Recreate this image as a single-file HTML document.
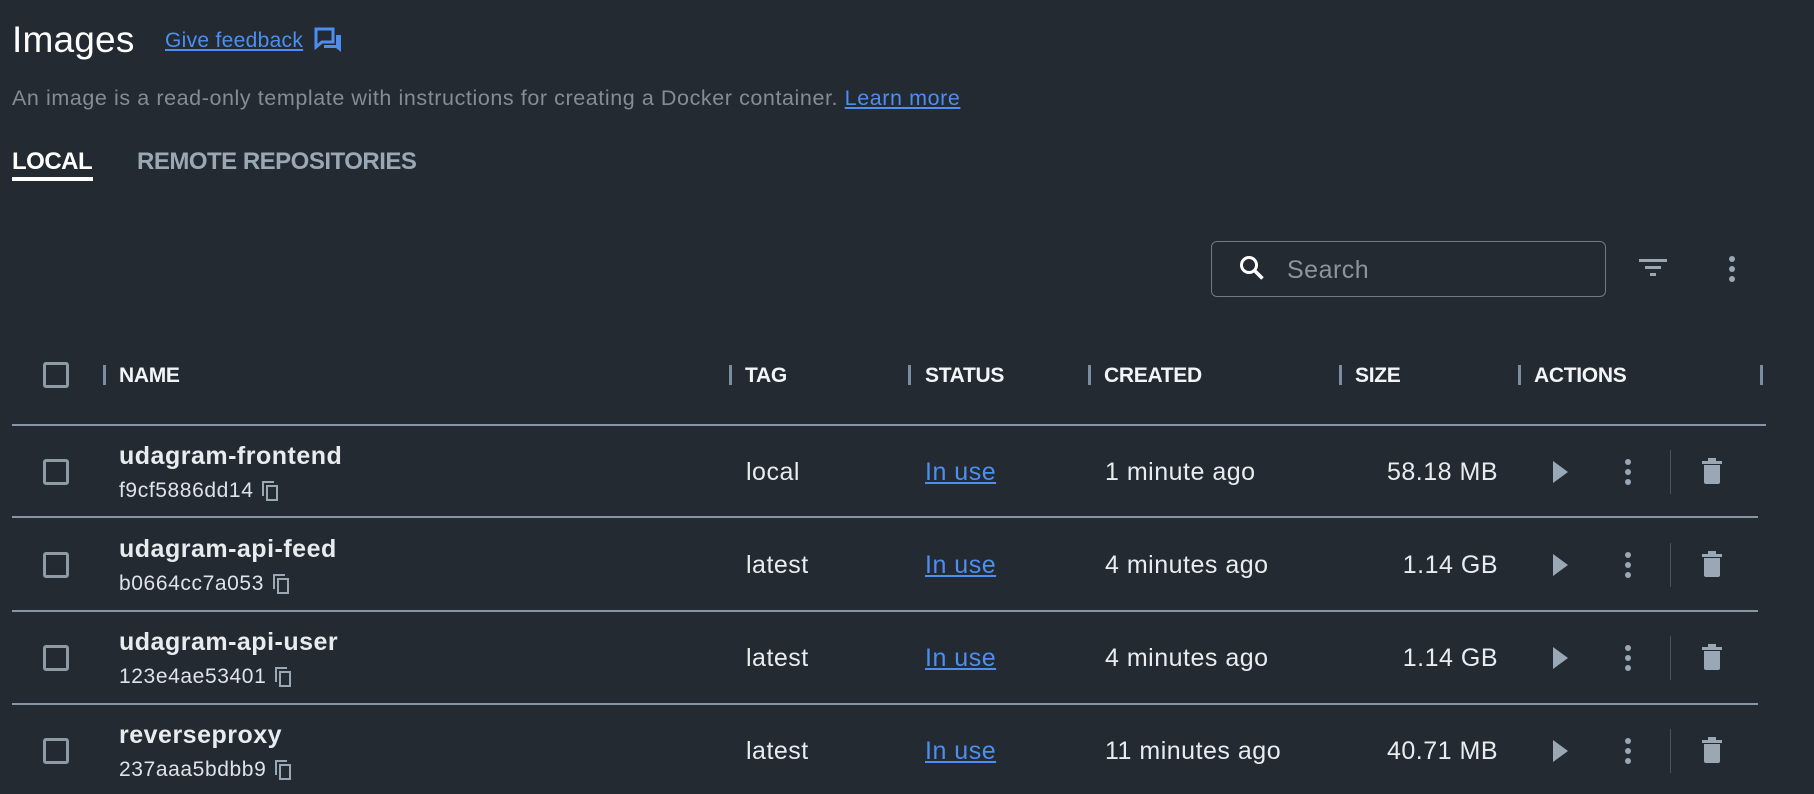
<!DOCTYPE html>
<html><head><meta charset="utf-8"><style>
*{margin:0;padding:0;box-sizing:border-box}
body{width:1814px;height:794px;background:#232a32;font-family:"Liberation Sans",sans-serif;color:#e9ecef;position:relative;overflow:hidden}
.a{position:absolute;white-space:nowrap}
a{color:#4d8ff0;text-decoration:underline}
.hdr{font-size:21px;font-weight:bold;color:#f2f4f6;top:364px;letter-spacing:-0.3px}
.sep{position:absolute;width:3px;height:20px;background:#7c8da0;top:365px}
.cb{position:absolute;left:43px;width:26px;height:26px;border:3px solid #8e9aa6;border-radius:3px}
.line{position:absolute;left:12px;height:2px;background:#8696a6}
.cell{font-size:25px;letter-spacing:0.5px}
.name{font-size:25px;font-weight:bold;letter-spacing:0.5px;left:119px}
.hash{font-size:21px;left:119px;color:#dfe3e7;letter-spacing:0.6px;display:flex;align-items:center}
.hash svg{margin-left:8px}
</style></head><body>
<div class="a" style="left:12px;top:19px;font-size:37px;color:#fff;letter-spacing:0.2px">Images</div>
<div class="a" style="left:165px;top:29px;font-size:21px;letter-spacing:0.3px"><a>Give feedback</a></div>
<svg class="a" style="left:314px;top:27px" width="30" height="28" viewBox="0 0 30 28"><path d="M2 2h17v13H8l-6 5z" fill="none" stroke="#4d8ff0" stroke-width="3"/><path d="M22 8h5v17l-5-4H10v-3h12z" fill="#4d8ff0"/></svg>
<div class="a" style="left:12px;top:86px;font-size:21.5px;color:#868c93;letter-spacing:0.58px">An image is a read-only template with instructions for creating a Docker container. <a>Learn more</a></div>
<div class="a" style="left:12px;top:148px;font-size:24px;font-weight:bold;color:#fff;letter-spacing:-0.5px">LOCAL</div>
<div class="a" style="left:12px;top:177px;width:81px;height:4px;background:#fff"></div>
<div class="a" style="left:137px;top:148px;font-size:24px;font-weight:bold;color:#9aa8b6;letter-spacing:-0.5px">REMOTE REPOSITORIES</div>
<div class="a" style="left:1211px;top:241px;width:395px;height:56px;border:1.5px solid #6e7a86;border-radius:6px"></div>
<svg class="a" style="left:1238px;top:254px" width="30" height="30" viewBox="0 0 30 30"><circle cx="11" cy="11" r="7.5" fill="none" stroke="#fff" stroke-width="3"/><path d="M16.5 16.5l8 8" stroke="#fff" stroke-width="3.5"/></svg>
<div class="a" style="left:1287px;top:256px;font-size:25px;color:#8d949b;letter-spacing:0.5px">Search</div>
<svg class="a" style="left:1638px;top:258px" width="30" height="20" viewBox="0 0 30 20"><rect x="1" y="1" width="28" height="3" fill="#9aa8b6"/><rect x="7" y="8" width="16" height="3" fill="#9aa8b6"/><rect x="12" y="15" width="6" height="3" fill="#9aa8b6"/></svg>
<svg class="a" style="left:1726px;top:255px" width="12" height="28" viewBox="0 0 12 28"><circle cx="6" cy="4" r="3" fill="#9aa8b6"/><circle cx="6" cy="14" r="3" fill="#9aa8b6"/><circle cx="6" cy="24" r="3" fill="#9aa8b6"/></svg>

<div class="cb" style="top:362px"></div>
<div class="sep" style="left:103px"></div><div class="a hdr" style="left:119px">NAME</div>
<div class="sep" style="left:729px"></div><div class="a hdr" style="left:745px">TAG</div>
<div class="sep" style="left:908px"></div><div class="a hdr" style="left:925px">STATUS</div>
<div class="sep" style="left:1088px"></div><div class="a hdr" style="left:1104px">CREATED</div>
<div class="sep" style="left:1339px"></div><div class="a hdr" style="left:1355px">SIZE</div>
<div class="sep" style="left:1518px"></div><div class="a hdr" style="left:1534px">ACTIONS</div>
<div class="sep" style="left:1760px"></div>
<div class="line" style="top:424px;width:1754px"></div>

<div class="cb" style="top:459px"></div>
<div class="a name" style="top:442px">udagram-frontend</div>
<div class="a hash" style="top:479px">f9cf5886dd14<svg width="18" height="22" viewBox="0 0 18 22"><path d="M2 16V2h11" fill="none" stroke="#9aa8b6" stroke-width="2"/><rect x="6" y="6" width="10" height="14" fill="none" stroke="#9aa8b6" stroke-width="2"/></svg></div>
<div class="a cell" style="left:746px;top:458px">local</div>
<div class="a cell" style="left:925px;top:458px"><a>In use</a></div>
<div class="a cell" style="left:1105px;top:458px">1 minute ago</div>
<div class="a cell" style="right:316px;top:458px">58.18 MB</div>
<div class="line" style="top:516px;width:1746px"></div>

<div class="cb" style="top:552px"></div>
<div class="a name" style="top:535px">udagram-api-feed</div>
<div class="a hash" style="top:572px">b0664cc7a053<svg width="18" height="22" viewBox="0 0 18 22"><path d="M2 16V2h11" fill="none" stroke="#9aa8b6" stroke-width="2"/><rect x="6" y="6" width="10" height="14" fill="none" stroke="#9aa8b6" stroke-width="2"/></svg></div>
<div class="a cell" style="left:746px;top:551px">latest</div>
<div class="a cell" style="left:925px;top:551px"><a>In use</a></div>
<div class="a cell" style="left:1105px;top:551px">4 minutes ago</div>
<div class="a cell" style="right:316px;top:551px">1.14 GB</div>
<div class="line" style="top:610px;width:1746px"></div>

<div class="cb" style="top:645px"></div>
<div class="a name" style="top:628px">udagram-api-user</div>
<div class="a hash" style="top:665px">123e4ae53401<svg width="18" height="22" viewBox="0 0 18 22"><path d="M2 16V2h11" fill="none" stroke="#9aa8b6" stroke-width="2"/><rect x="6" y="6" width="10" height="14" fill="none" stroke="#9aa8b6" stroke-width="2"/></svg></div>
<div class="a cell" style="left:746px;top:644px">latest</div>
<div class="a cell" style="left:925px;top:644px"><a>In use</a></div>
<div class="a cell" style="left:1105px;top:644px">4 minutes ago</div>
<div class="a cell" style="right:316px;top:644px">1.14 GB</div>
<div class="line" style="top:703px;width:1746px"></div>

<div class="cb" style="top:738px"></div>
<div class="a name" style="top:721px">reverseproxy</div>
<div class="a hash" style="top:758px">237aaa5bdbb9<svg width="18" height="22" viewBox="0 0 18 22"><path d="M2 16V2h11" fill="none" stroke="#9aa8b6" stroke-width="2"/><rect x="6" y="6" width="10" height="14" fill="none" stroke="#9aa8b6" stroke-width="2"/></svg></div>
<div class="a cell" style="left:746px;top:737px">latest</div>
<div class="a cell" style="left:925px;top:737px"><a>In use</a></div>
<div class="a cell" style="left:1105px;top:737px">11 minutes ago</div>
<div class="a cell" style="right:316px;top:737px">40.71 MB</div>

<svg class="a" style="left:1550px;top:447px" width="200" height="50" viewBox="0 0 200 50"><path d="M3 14l15 11-15 11z" fill="#9aa8b6"/><circle cx="78" cy="15" r="3" fill="#9aa8b6"/><circle cx="78" cy="25" r="3" fill="#9aa8b6"/><circle cx="78" cy="35" r="3" fill="#9aa8b6"/><rect x="120" y="3" width="1" height="44" fill="#48535e"/><path d="M152 14h20v3h-20zM158 11h8v3h-8zM154 18h16v17q0 2-2 2h-12q-2 0-2-2z" fill="#9aa8b6"/></svg>
<svg class="a" style="left:1550px;top:540px" width="200" height="50" viewBox="0 0 200 50"><path d="M3 14l15 11-15 11z" fill="#9aa8b6"/><circle cx="78" cy="15" r="3" fill="#9aa8b6"/><circle cx="78" cy="25" r="3" fill="#9aa8b6"/><circle cx="78" cy="35" r="3" fill="#9aa8b6"/><rect x="120" y="3" width="1" height="44" fill="#48535e"/><path d="M152 14h20v3h-20zM158 11h8v3h-8zM154 18h16v17q0 2-2 2h-12q-2 0-2-2z" fill="#9aa8b6"/></svg>
<svg class="a" style="left:1550px;top:633px" width="200" height="50" viewBox="0 0 200 50"><path d="M3 14l15 11-15 11z" fill="#9aa8b6"/><circle cx="78" cy="15" r="3" fill="#9aa8b6"/><circle cx="78" cy="25" r="3" fill="#9aa8b6"/><circle cx="78" cy="35" r="3" fill="#9aa8b6"/><rect x="120" y="3" width="1" height="44" fill="#48535e"/><path d="M152 14h20v3h-20zM158 11h8v3h-8zM154 18h16v17q0 2-2 2h-12q-2 0-2-2z" fill="#9aa8b6"/></svg>
<svg class="a" style="left:1550px;top:726px" width="200" height="50" viewBox="0 0 200 50"><path d="M3 14l15 11-15 11z" fill="#9aa8b6"/><circle cx="78" cy="15" r="3" fill="#9aa8b6"/><circle cx="78" cy="25" r="3" fill="#9aa8b6"/><circle cx="78" cy="35" r="3" fill="#9aa8b6"/><rect x="120" y="3" width="1" height="44" fill="#48535e"/><path d="M152 14h20v3h-20zM158 11h8v3h-8zM154 18h16v17q0 2-2 2h-12q-2 0-2-2z" fill="#9aa8b6"/></svg>
</body></html>
